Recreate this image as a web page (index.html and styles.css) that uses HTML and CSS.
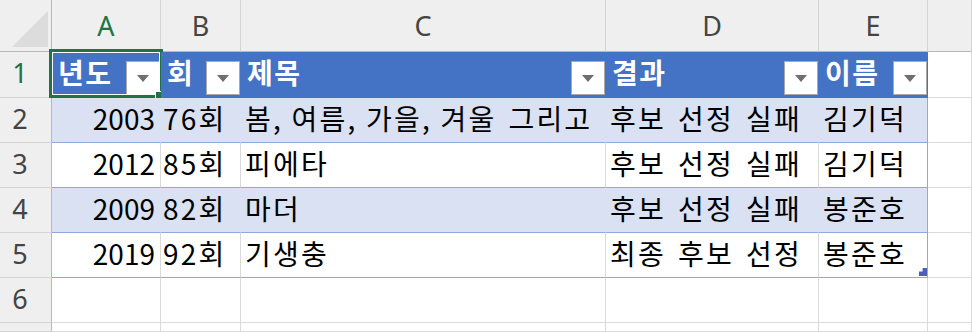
FILE: index.html
```html
<!DOCTYPE html>
<html lang="ko">
<head>
<meta charset="utf-8">
<link rel="stylesheet" href="styles.css">
</head>
<body>
<div class="sheet">
  <div class="corner"><svg width="51" height="51" viewBox="0 0 51 51"><polygon points="12,47 48,11 48,47" fill="#dcdcdc"/></svg></div>
  <div class="ch sel">A</div>
  <div class="ch">B</div>
  <div class="ch">C</div>
  <div class="ch">D</div>
  <div class="ch">E</div>
  <div class="ch"></div>

  <div class="rh sel">1</div>
  <div class="c th"><span class="t">년도</span><span class="fb"></span><span class="selbox"></span><span class="handle"></span></div>
  <div class="c th"><span class="t">회</span><span class="fb"></span></div>
  <div class="c th"><span class="t">제목</span><span class="fb"></span></div>
  <div class="c th"><span class="t">결과</span><span class="fb"></span></div>
  <div class="c th end-th"><span class="t">이름</span><span class="fb"></span></div>
  <div class="c"></div>

  <div class="rh">2</div>
  <div class="c band num">2003</div>
  <div class="c band txt short">76회</div>
  <div class="c band txt">봄<span class="cm">,</span> 여름<span class="cm">,</span> 가을<span class="cm">,</span> 겨울 그리고</div>
  <div class="c band txt">후보 선정 실패</div>
  <div class="c band txt end">김기덕</div>
  <div class="c"></div>

  <div class="rh">3</div>
  <div class="c plain num">2012</div>
  <div class="c plain txt short">85회</div>
  <div class="c plain txt">피에타</div>
  <div class="c plain txt">후보 선정 실패</div>
  <div class="c plain txt end">김기덕</div>
  <div class="c"></div>

  <div class="rh">4</div>
  <div class="c band num">2009</div>
  <div class="c band txt short">82회</div>
  <div class="c band txt">마더</div>
  <div class="c band txt">후보 선정 실패</div>
  <div class="c band txt end">봉준호</div>
  <div class="c"></div>

  <div class="rh">5</div>
  <div class="c plain num">2019</div>
  <div class="c plain txt short">92회</div>
  <div class="c plain txt">기생충</div>
  <div class="c plain txt">최종 후보 선정</div>
  <div class="c plain txt end">봉준호<span class="resize"></span></div>
  <div class="c"></div>

  <div class="rh">6</div>
  <div class="c"></div><div class="c"></div><div class="c"></div><div class="c"></div><div class="c"></div><div class="c"></div>

  <div class="rh"></div>
  <div class="c"></div><div class="c"></div><div class="c"></div><div class="c"></div><div class="c"></div><div class="c"></div>
</div>
</body>
</html>
```
FILE: styles.css
```css
html, body {
  margin: 0;
  padding: 0;
  background: #fff;
  overflow: hidden;
}

.sheet {
  display: grid;
  grid-template-columns: 52px 109px 80px 365px 213px 109px 1fr;
  grid-template-rows: 52px 46px 45px 45px 45px 45px 45px 1fr;
  width: 972px;
  height: 332px;
  font-family: "Noto Sans CJK KR", "Noto Sans", sans-serif;
  font-size: 28px;
  color: #000;
}

.sheet > div {
  box-sizing: border-box;
  border-right: 1px solid #dadada;
  border-bottom: 1px solid #dadada;
  min-width: 0;
  white-space: nowrap;
}

.corner {
  background: #efefef;
  border-right-color: #b8b8b8 !important;
  border-bottom-color: #b8b8b8 !important;
}
.corner svg { display: block; }

.ch {
  background: #efefef;
  border-right-color: #d4d4d4 !important;
  border-bottom-color: #b8b8b8 !important;
  font-family: "Noto Sans", sans-serif;
  font-size: 27px;
  color: #444;
  text-align: center;
  line-height: 51px;
}

.rh {
  background: #efefef;
  border-right-color: #b8b8b8 !important;
  border-bottom-color: #d4d4d4 !important;
  font-family: "Noto Sans", sans-serif;
  font-size: 27px;
  color: #444;
  text-align: center;
  padding-right: 11px;
  line-height: 42px;
}

.sel { color: #217346; }

.c {
  line-height: 40px;
  padding: 0 4px;
  overflow: visible;
  position: relative;
}

.txt { letter-spacing: 2.2px; word-spacing: 2px; }
.short { padding-left: 2px; }
.cm { letter-spacing: -1.3px; }

.num { text-align: right; padding-right: 5px; }

.th {
  background: #4472c4;
  border-right-color: #4472c4 !important;
  border-bottom-color: #4472c4 !important;
  color: #fff;
  font-weight: bold;
  display: flex;
  justify-content: space-between;
  align-items: flex-start;
  padding-left: 6px;
  padding-right: 0;
}

.t { display: block; letter-spacing: 1.5px; }

.fb {
  position: relative;
  flex: none;
  box-sizing: border-box;
  width: 34px;
  height: 34px;
  margin-top: 9px;
  background: #fff;
  border: 1px solid #a9a9a9;
}
.fb::after {
  content: "";
  position: absolute;
  left: 10px;
  top: 13px;
  border-left: 6px solid transparent;
  border-right: 6px solid transparent;
  border-top: 7px solid #6f6f6f;
}

.band {
  background: #d9e1f2;
  border-right-color: #d9e1f2 !important;
  border-bottom-color: #8ea9db !important;
}
.plain {
  background: #fff;
  border-bottom-color: #8ea9db !important;
}
.end { border-right-color: #8ea9db !important; }

.selbox {
  position: absolute;
  left: -3px;
  top: -3px;
  width: 114px;
  height: 49px;
  box-sizing: border-box;
  border: 3px solid #217346;
  box-shadow: inset 0 0 0 1px #fff;
  pointer-events: none;
}
.handle {
  position: absolute;
  left: 103px;
  top: 39px;
  width: 9px;
  height: 9px;
  box-sizing: border-box;
  background: #217346;
  border-left: 1px solid #fff;
  border-top: 1px solid #fff;
}

.resize {
  position: absolute;
  left: 100px;
  top: 35px;
  width: 8px;
  height: 8px;
  background: #4a5ec0;
  clip-path: polygon(100% 0, 100% 100%, 0 100%, 0 45%, 45% 45%, 45% 0);
}
```
